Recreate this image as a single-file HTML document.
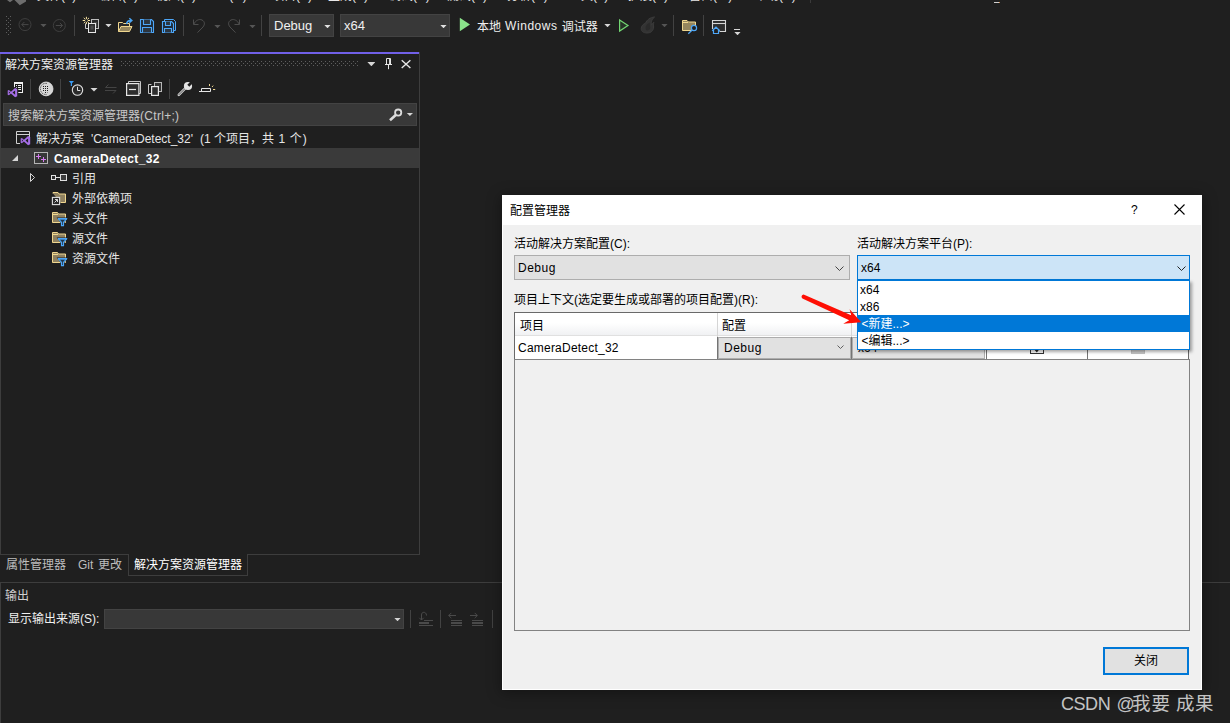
<!DOCTYPE html>
<html lang="zh-CN">
<head>
<meta charset="utf-8">
<title>配置管理器</title>
<style>
*{box-sizing:border-box;margin:0;padding:0}
html,body{width:1230px;height:723px;overflow:hidden;background:#1f1f1f}
body{position:relative;font-family:"Liberation Sans","Noto Sans CJK SC",sans-serif;font-size:12px;color:#e6e6e6;line-height:1}
.abs{position:absolute}
.t{position:absolute;white-space:nowrap;line-height:16px;height:16px}
svg{position:absolute;overflow:visible}
/* menu row (clipped) */
#menu{position:absolute;left:0;top:-12px;height:16px;width:1230px;color:#e8e8e8}
#menu span{position:absolute;top:0;white-space:nowrap;line-height:16px}
/* toolbar */
.combo{position:absolute;top:14px;height:23px;background:#383838;border:1px solid #434343;color:#f0f0f0;font-size:13px;line-height:21px;padding-left:4px}
.vsep{position:absolute;width:1px;background:#424242}
.dd{position:absolute;width:6.2px;height:3.3px;margin-left:.4px;background:#d0d0d0;clip-path:polygon(0 0,100% 0,50% 100%)}
/* solution explorer */
#se{position:absolute;left:0;top:52px;width:420px;height:503px;border-left:1px solid #3d3d3d;border-right:1px solid #3d3d3d;border-bottom:1px solid #3d3d3d;background:#1f1f1f}
#se .accent{position:absolute;left:-1px;top:0;width:419px;height:2px;background:#7160e8}
.row{position:absolute;left:0;width:418px;height:20px}
/* dialog */
#dlg{position:absolute;left:502px;top:195px;width:700px;height:495px;background:#f0f0f0;color:#000;box-shadow:0 2px 13px 1px rgba(0,0,0,.35)}
#dlg::after{content:"";position:absolute;left:0;top:0;width:700px;height:495px;border:1px solid #fff;box-sizing:border-box;pointer-events:none}
#dlg .title{position:absolute;left:0;top:0;width:700px;height:30px;background:#fff}

.dots{position:absolute;background-image:radial-gradient(circle,#5a5a5a 0.6px,transparent 0.8px);background-size:4px 4px;}
#search{position:absolute;left:2px;top:51px;width:414px;height:23px;background:#383838;border:1px solid #434343}
.row.sel{background:#3a3a3a}
#acttab{position:absolute;left:128px;top:554px;width:120px;height:22px;border:1px solid #3d3d3d;border-top:none;background:#1f1f1f}
#out{position:absolute;left:0;top:582px;width:1230px;height:141px;border-top:1px solid #3d3d3d;border-left:1px solid #3d3d3d}
#outcombo{position:absolute;left:103px;top:26px;width:300px;height:20px;background:#383838;border:1px solid #434343}
.wcombo{position:absolute;background:#e1e1e1;border:1px solid #adadad}
.wcombo.act{background:#cce4f7;border-color:#0078d7}
#grid{position:absolute;left:12px;top:117px;width:675px;height:48px;background:#fff;border:1px solid #696969}
#grid .hdr{position:absolute;left:0;top:0;width:673px;height:23px;background:linear-gradient(#fff 0,#fff 45%,#f0f1f3 100%);border-bottom:1px solid #e0e0e0}
.cline{position:absolute;top:0;width:1px;height:46px;background:#d5d5d5}
.gcombo{position:absolute;background:#e1e1e1;border:1px solid #adadad}
.cb{position:absolute;width:14px;height:13px;border:1px solid #333;background:#fff}
.cb.dis{border-color:#c4c4c4;background:#cfcfcf}
#gridbody{position:absolute;left:12px;top:164px;width:676px;height:272px;border:1px solid #828282;background:#f0f0f0}
#ddl{position:absolute;left:355px;top:85px;width:333px;height:70px;background:#fff;border:1px solid #0078d7;box-shadow:2px 2px 3px rgba(0,0,0,.35)}
#ddl .it{position:absolute;left:0;width:331px;height:17px;line-height:19px;padding-left:2px;white-space:nowrap;overflow:hidden}
#ddl .it.hi{background:#0078d7;color:#fff}
#closebtn{position:absolute;left:601px;top:452px;width:86px;height:28px;border:2px solid #0078d7;background:#e1e1e1;text-align:center;line-height:24px}
#wm{position:absolute;left:1061px;top:693px;width:160px;height:22px;font-size:18.500px;line-height:22px;color:#c4c4c4;white-space:nowrap}
#wm span{position:absolute;top:0}

.grip{position:absolute;width:5px;height:20px;background-image:radial-gradient(circle,#5c5c5c 0.7px,transparent 0.9px),radial-gradient(circle,#5c5c5c 0.7px,transparent 0.9px);background-size:4px 4px,4px 4px;background-position:-1.5px -1.5px,0.5px 0.5px}
.seg{position:absolute;top:0}
.dline{position:absolute;top:24px;width:1px;height:22px;background:#747474}
</style>
</head>
<body>
<div id="menu"><span style="left:37px">文件(F)</span><span style="left:98px">编辑(E)</span><span style="left:156px">视图(V)</span><span style="left:214px">Git(G)</span><span style="left:272px">项目(P)</span><span style="left:328px">生成(B)</span><span style="left:389px">调试(D)</span><span style="left:447px">测试(S)</span><span style="left:507px">分析(N)</span><span style="left:569px">工具(T)</span><span style="left:628px">扩展(X)</span><span style="left:689px">窗口(W)</span><span style="left:755px">帮助(H)</span></div>
<svg style="left:0;top:0" width="30" height="6" viewBox="0 0 30 6"><path d="M7 0L10 2.200L13 0Z M14.500 0L19.800 5.200L26 1.500V0Z" fill="#6e6e6e"/></svg>
<div class="abs" style="left:994px;top:2px;width:5px;height:1px;background:#cfcfcf"></div><div class="abs" style="left:999px;top:2px;width:1px;height:1px;background:#d08a4a"></div><div class="abs" style="left:810px;top:0;width:1px;height:3px;background:#3a3a3a"></div>
<div id="tb">
<svg style="left:6px;top:16px" width="5" height="20" viewBox="0 0 5 20" shape-rendering="crispEdges"><defs><pattern id="gp" width="4" height="4" patternUnits="userSpaceOnUse"><rect x="0" y="0" width="1" height="1" fill="#5e5e5e"/><rect x="2" y="2" width="1" height="1" fill="#5e5e5e"/></pattern></defs><rect width="5" height="20" fill="url(#gp)"/></svg>
<svg style="left:18px;top:18px" width="14" height="14" viewBox="0 0 14 14"><circle cx="7" cy="6.6" r="6" fill="none" stroke="#3e3e3e" stroke-width="1"/><path d="M10.5 6.6H3.8M6.4 4L3.8 6.6L6.4 9.2" fill="none" stroke="#474747" stroke-width="1"/></svg>
<div class="dd" style="left:40px;top:24px;background:#555"></div>
<svg style="left:52px;top:18px" width="14" height="14" viewBox="0 0 14 14"><circle cx="7.3" cy="7.5" r="6" fill="none" stroke="#3e3e3e" stroke-width="1"/><path d="M3.8 7.5H10.5M7.9 4.9L10.5 7.5L7.9 10.1" fill="none" stroke="#474747" stroke-width="1"/></svg>
<div class="vsep" style="left:74px;top:15px;height:21px"></div>
<!-- new project -->
<svg style="left:82px;top:16px" width="18" height="18" viewBox="82 16 18 18">
<rect x="91.5" y="19.5" width="7" height="9" fill="#2a2a2a" stroke="#bdbdbd" stroke-width="1"/>
<rect x="94" y="22" width="3" height="5" fill="#4a4a4a"/>
<path d="M85.5 23.5V28.5H88.5" fill="none" stroke="#c8c8c8" stroke-width="1"/>
<rect x="88.5" y="23.5" width="7" height="9" fill="#2e2e2e" stroke="#e6e6e6" stroke-width="1"/>
<rect x="90.5" y="25.5" width="3" height="4" fill="#4a4a4a"/>
<path d="M87.80 20.50L90.10 20.50M87.39 21.49L89.02 23.12M86.40 21.90L86.40 24.20M85.41 21.49L83.78 23.12M85.00 20.50L82.70 20.50M85.41 19.51L83.78 17.88M86.40 19.10L86.40 16.80M87.39 19.51L89.02 17.88" stroke="#f7e3a1" stroke-width="1" fill="none"/>
</svg>
<div class="dd" style="left:105px;top:24px;background:#d6d6d6"></div>
<!-- open folder -->
<svg style="left:117px;top:16px" width="18" height="18" viewBox="117 16 18 18">
<path d="M118.5 31.5V22.5H122.5L123.5 23.5H129.5V26" fill="#2b2b2b" stroke="#f0d78f" stroke-width="1"/>
<path d="M118.5 31.5L121 26.5H132L129.5 31.5Z" fill="#96875f" stroke="#f0d78f" stroke-width="1" stroke-linejoin="round"/>
<path d="M126.7 24C126.7 21.5 128 20.4 131 20.4M129.3 18.2L131.8 20.4L129.3 22.7" fill="none" stroke="#4ba6f5" stroke-width="1.5"/>
</svg>
<!-- save -->
<svg style="left:139px;top:17px" width="17" height="17" viewBox="139 17 17 17">
<path d="M140.5 19.5H151.5L153.5 21.5V32.5H140.5Z" fill="#1f2a36" stroke="#4da6f7" stroke-width="1.1"/>
<path d="M143.5 19.5V24.5H150.5V19.5" fill="#2b3540" stroke="#4da6f7" stroke-width="1.1"/>
<path d="M142.5 32.5V27.5H151.5V32.5" fill="#2b3540" stroke="#4da6f7" stroke-width="1.1"/>
</svg>
<!-- save all -->
<svg style="left:161px;top:17px" width="17" height="17" viewBox="161 17 17 17">
<path d="M164.500 21V19.500H173.500L175.500 21.500V30.500H174" fill="none" stroke="#4da6f7" stroke-width="1"/>
<path d="M162.500 21.500H171.500L173.500 23.500V32.500H162.500Z" fill="#1f2a36" stroke="#4da6f7" stroke-width="1.1"/>
<path d="M165.500 21.500V25.500H170.500V21.500" fill="#2b3540" stroke="#4da6f7" stroke-width="1.1"/>
<path d="M164.500 32.500V28.500H171.500V32.500" fill="#2b3540" stroke="#4da6f7" stroke-width="1.1"/>
</svg>
<div class="vsep" style="left:183px;top:15px;height:21px"></div>
<!-- undo -->
<svg style="left:192px;top:17px" width="15" height="17" viewBox="192 17 15 17">
<path d="M193.500 19.500V24.500H198.500" fill="none" stroke="#4d4d4d" stroke-width="1"/>
<path d="M193.800 24.200C195.500 20.500 199 18.600 202 20C205 21.600 205 24.500 203 27L197.500 32.600" fill="none" stroke="#4d4d4d" stroke-width="1"/>
</svg>
<div class="dd" style="left:214px;top:25px;background:#555"></div>
<!-- redo -->
<svg style="left:227px;top:17px" width="15" height="17" viewBox="227 17 15 17">
<path d="M239.500 19.500V24.500H234.500" fill="none" stroke="#4d4d4d" stroke-width="1"/>
<path d="M239.200 24.200C237.500 20.500 234 18.600 231 20C228 21.600 228 24.500 230 27L235.500 32.600" fill="none" stroke="#4d4d4d" stroke-width="1"/>
</svg>
<div class="dd" style="left:249px;top:25px;background:#555"></div>
<div class="vsep" style="left:261px;top:15px;height:21px"></div>
<div class="combo" style="left:269px;width:65px">Debug</div>
<div class="dd" style="left:324px;top:25px;background:#e0e0e0"></div>
<div class="combo" style="left:340px;width:110px;padding-left:3px">x64</div>
<div class="dd" style="left:440px;top:25px;background:#e0e0e0"></div>
<svg style="left:459px;top:17px" width="12" height="15" viewBox="0 0 12 15"><path d="M0.8 0.8L11 7.5L0.8 14.2Z" fill="#8ae28a"/></svg>
<div class="t" style="left:477px;top:18px;color:#f0f0f0;word-spacing:0.7px"><span style="position:relative;top:0.7px">本地</span> <span style="letter-spacing:0.55px">Windows</span> <span style="position:relative;top:0.7px">调试器</span></div>
<div class="dd" style="left:604px;top:24px;background:#d6d6d6"></div>
<svg style="left:618px;top:18px" width="12" height="15" viewBox="618 18 12 15"><path d="M619.600 19.900L628 25.500L619.600 31.100Z" fill="#263326" stroke="#72d572" stroke-width="1.2"/></svg>
<!-- flame -->
<svg style="left:640px;top:16px" width="16" height="18" viewBox="640 16 16 18">
<path d="M654.600 17C650 17.400 646.600 20 645.600 23.200C643 24 641.200 26.200 641.200 28.600C641.200 31.400 643.600 33 647.200 33C651 33 653.600 30.600 653.600 27C653.600 25.500 653.300 24.400 653.900 22.400C652.600 23 652 24 651.800 25.200C650.800 23 651.200 19.600 654.600 17Z" fill="#333" stroke="#3d3d3d" stroke-width="0.9"/>
<path d="M650 22.500C647.500 23.500 645.500 25.500 645.500 28C645.500 29.500 646.300 30.600 647.500 30.600C649.200 30.600 650.400 29 650.200 27C649.900 25.500 649.600 24.200 650 22.500Z" fill="#2a2a2a"/>
</svg>
<div class="dd" style="left:661px;top:24px;background:#555"></div>
<div class="vsep" style="left:673px;top:15px;height:21px"></div>
<!-- folder search -->
<svg style="left:681px;top:18px" width="18" height="17" viewBox="681 18 18 17">
<path d="M682.500 30.500V20.500H687L688.500 22H695.500V30.500Z" fill="#95865e" stroke="#f0d78f" stroke-width="1"/>
<path d="M683 22.500H688" stroke="#f0d78f" stroke-width="1"/><circle cx="694" cy="28" r="2.600" fill="#1f1f1f" stroke="#4da6f7" stroke-width="1.200"/>
<path d="M692.200 30L688.300 33.800" stroke="#4da6f7" stroke-width="1.200" fill="none"/>
</svg>
<div class="vsep" style="left:703px;top:15px;height:21px"></div>
<!-- window home -->
<svg style="left:711px;top:18px" width="17" height="17" viewBox="711 18 17 17">
<path d="M719.500 31.500H725.500V20.500H712.500V29" fill="#2e2e2e" stroke="#d6d6d6" stroke-width="1.100"/>
<path d="M712.500 23.500H725.500" stroke="#d6d6d6" stroke-width="1.100"/>
<path d="M712.200 30.800L716 27.200L719.800 30.800M713.500 30V33.500H718.500V30" fill="#1f1f1f" stroke="#4da6f7" stroke-width="1.200"/>
</svg>
<div class="abs" style="left:734px;top:29px;width:6px;height:1px;background:#d6d6d6"></div>
<div class="dd" style="left:734px;top:32px;background:#d6d6d6"></div>
</div>
<div id="se"><div class="accent"></div>

<div class="t" style="left:4px;top:5px;color:#f0f0f0">解决方案资源管理器</div>
<svg style="left:120px;top:9px" width="238" height="5" viewBox="0 0 238 5" shape-rendering="crispEdges"><rect width="238" height="5" fill="url(#gp)"/></svg>
<div class="dd" style="left:366px;top:10px;background:#d6d6d6;width:8px;height:4.200px"></div>
<div id="search"><span class="t" style="left:4px;top:4px;color:#c8c8c8">搜索解决方案资源管理器<span style="letter-spacing:0.3px">(Ctrl+;)</span></span></div>
<div class="row" style="top:76px"><span class="t" style="left:35px;top:3px">解决方案 <span class="seg" id="s1" style="left:55px">'CameraDetect_32'</span> <span class="seg" id="s2" style="left:164px">(1 个项目，共<span style="word-spacing:1.2px"> 1 个</span><span style="margin-left:1px">)</span></span></span></div>
<div class="row sel" style="top:96px"><span class="t" style="left:53px;top:3px;font-weight:bold;color:#fff;letter-spacing:0.33px">CameraDetect_32</span></div>
<div class="row" style="top:116px"><span class="t" style="left:71px;top:3px">引用</span></div>
<div class="row" style="top:136px"><span class="t" style="left:71px;top:3px">外部依赖项</span></div>
<div class="row" style="top:156px"><span class="t" style="left:71px;top:3px">头文件</span></div>
<div class="row" style="top:176px"><span class="t" style="left:71px;top:3px">源文件</span></div>
<div class="row" style="top:196px"><span class="t" style="left:71px;top:3px">资源文件</span></div>

<svg style="left:-1px;top:-52px" width="420" height="330" viewBox="0 0 420 330">
<!-- pin -->
<path d="M386.500 64V58.500H390.500V64M385 64.500H392M388.500 65V69.200M389.600 58.500V64" fill="none" stroke="#e6e6e6" stroke-width="1"/>
<!-- close -->
<path d="M401.700 60.300L410.400 68M410.400 60.300L401.700 68" fill="none" stroke="#e6e6e6" stroke-width="1.400"/>
<!-- icon1: doc + VS -->
<rect x="14.500" y="82.500" width="8" height="10" fill="#1b1b1b" stroke="#f0f0f0" stroke-width="1"/>
<path d="M14.500 83.500H22.500" stroke="#f0f0f0" stroke-width="1"/>
<path d="M16 85.500H17M18 85.500H21M16 87.500H17M18 87.500H21M18 89.500H21" stroke="#f0f0f0" stroke-width="1"/>
<g id="vslogo"><path d="M7 89.500L12.500 86.500L18.300 88.300V97.500L12 98.200L7 96Z" fill="#1f1f1f"/>
<path fill-rule="evenodd" d="M15.100 88L17.200 88.900V96.300L15.100 97.200L10.900 93.500L8.900 95.300L7.700 94.700V90.500L8.900 89.900L10.900 91.700ZM15.100 90.400L12.500 92.600L15.100 94.800ZM8.900 91.500V93.700L10.100 92.600Z" fill="#a56ee6"/></g>
<path d="M30.500 79V99M60.500 79V99M169.500 79V99" stroke="#424242" stroke-width="1"/>
<!-- icon2: globe-like -->
<circle cx="46.100" cy="88.900" r="6.900" fill="#d6d6d6" stroke="#ececec" stroke-width="0.800"/>
<g fill="#1e1e1e"><rect x="43" y="86" width="1" height="1"/><rect x="45" y="86" width="1" height="1"/><rect x="47" y="86" width="1" height="1"/><rect x="43" y="88" width="1" height="1"/><rect x="45" y="88" width="1" height="1"/><rect x="47" y="88" width="1" height="1"/><rect x="43" y="90" width="1" height="1"/><rect x="45" y="90" width="1" height="1"/><rect x="47" y="90" width="1" height="1"/><rect x="45" y="92" width="1" height="1"/><rect x="47" y="92" width="1" height="1" opacity="0.4"/></g>
<path d="M47 83.400C42.500 82.800 40.400 85.800 40.400 88.900C40.400 92 42.500 95 47 94.400" fill="none" stroke="#555" stroke-width="0.900" stroke-dasharray="1.600 0.800"/>
<!-- icon3: filter + clock -->
<path d="M68.800 81H74L72 83.200V86H70.800V83.200Z" fill="#3a9cf5"/>
<circle cx="77.500" cy="90.100" r="5.200" fill="#2b2b2b" stroke="#e0e0e0" stroke-width="1.100"/>
<path d="M77.500 86.800V90.500H80.300" fill="none" stroke="#e0e0e0" stroke-width="1"/>
<path d="M90.500 88H97.500L94 91.500Z" fill="#d6d6d6"/>
<!-- sync disabled -->
<path d="M116.500 87.500H105.500L108.500 84.500M105 90.500H116L113 93.500" fill="none" stroke="#444" stroke-width="1"/>
<!-- collapse all -->
<path d="M128.500 83V81.500H140.500V93.500H139" fill="none" stroke="#c8c8c8" stroke-width="1"/>
<rect x="126.600" y="83.600" width="12.300" height="11.800" fill="#2e2e2e" stroke="#e6e6e6" stroke-width="1.200"/>
<path d="M129 89.500H136" stroke="#e6e6e6" stroke-width="1.200"/>
<!-- show all files -->
<rect x="154.500" y="82.500" width="7" height="9" fill="#333" stroke="#b8b8b8" stroke-width="1"/>
<path d="M155.500 86V90H159" fill="none" stroke="#6a6a6a" stroke-width="1"/>
<path d="M151.500 84.500H148.500V93.500H151.500" fill="none" stroke="#c8c8c8" stroke-width="1"/>
<rect x="151.600" y="86.600" width="6.800" height="8.800" fill="#2e2e2e" stroke="#e6e6e6" stroke-width="1.200"/>
<!-- wrench -->
<path d="M178.800 94.800L186.200 87.400" stroke="#d0d0d0" stroke-width="2.600" stroke-linecap="round"/>
<path d="M178.900 94.700L186 87.600" stroke="#4a4a4a" stroke-width="0.900" stroke-linecap="round"/>
<circle cx="188" cy="86" r="4.100" fill="#e6e6e6"/><path d="M188.300 85.700L193 81" stroke="#1f1f1f" stroke-width="2.800" fill="none"/>
<!-- preview selected -->
<path d="M199 91.500H210.500V88.500H201.500V91.500" fill="none" stroke="#e6e6e6" stroke-width="1"/>
<path d="M209.500 84V86M212 87L213.200 85.600M213 89.500H215.200" stroke="#f0d78f" stroke-width="1"/>
<!-- search icon -->
<circle cx="398.200" cy="112.600" r="3.100" fill="none" stroke="#dcdcdc" stroke-width="1.800"/>
<path d="M396 114.800L390 120.200" stroke="#dcdcdc" stroke-width="2.600"/>
<path d="M406.800 112.900H413L409.900 116.100Z" fill="#d6d6d6"/>
<!-- solution icon -->
<path d="M20 143.500H16.500V131.500H29.500V137" fill="none" stroke="#d0d0d0" stroke-width="1"/>
<path d="M16.500 134.500H29.500" stroke="#d0d0d0" stroke-width="1"/>
<g transform="translate(13,48)"><path fill-rule="evenodd" d="M15.100 88L17.200 88.900V96.300L15.100 97.200L10.900 93.500L8.900 95.300L7.700 94.700V90.500L8.900 89.900L10.900 91.700ZM15.100 90.400L12.500 92.600L15.100 94.800ZM8.900 91.500V93.700L10.100 92.600Z" fill="#a56ee6"/></g>
<!-- expander open -->
<path d="M18 155V161H12Z" fill="#d6d6d6"/>
<!-- project icon -->
<rect x="34.500" y="152.500" width="13" height="11" fill="#383838" stroke="#b4b4b4" stroke-width="1"/>
<path d="M36 156.500H41M38.500 154V159M41 159.500H46M43.500 157V162" stroke="#d67cf0" stroke-width="1"/>
<!-- expander closed -->
<path d="M30.500 173.500L34.500 177.500L30.500 181.500Z" fill="none" stroke="#d6d6d6" stroke-width="1"/>
<!-- references -->
<rect x="51.500" y="175.500" width="4" height="4" fill="#2e2e2e" stroke="#e0e0e0" stroke-width="1"/>
<path d="M56 177.500H60" stroke="#e0e0e0" stroke-width="1"/>
<rect x="60.500" y="174.500" width="6" height="6" fill="#3e3e3e" stroke="#e0e0e0" stroke-width="1"/>
<!-- external deps -->
<path d="M53 193.500V192.500H58L59 194H65.500V202.500H60.500" fill="#8f8160" stroke="#f0d78f" stroke-width="1"/>
<rect x="52.400" y="197.400" width="7.200" height="7.200" fill="#2a2a2a" stroke="#e0e0e0" stroke-width="1.100"/>
<path d="M54.500 202.500L57.500 199.500M55 199.500H57.500V202" fill="none" stroke="#d6d6d6" stroke-width="1"/>
</svg>
<svg style="left:50px;top:159px" width="17" height="16" viewBox="51 211 17 16">
<path d="M52.500 222.500V212.500H57.500L58.500 214H65.500V222.500Z" fill="#8f8160" stroke="#f0d78f" stroke-width="1"/>
<path d="M53 214.500H58" stroke="#f0d78f" stroke-width="1"/>
<path d="M56.600 217.400H68.400L64.600 222.200V227H60.400V222.200Z" fill="#1f1f1f"/>
<path d="M58.200 218.700H66.800L63.500 222.300V225.700H61.500V222.300Z" fill="#22384d" stroke="#4da6f7" stroke-width="1.200" stroke-linejoin="round"/><path d="M58 218.900H67" stroke="#4da6f7" stroke-width="1.300"/>
</svg>
<svg style="left:50px;top:179px" width="17" height="16" viewBox="51 211 17 16">
<path d="M52.500 222.500V212.500H57.500L58.500 214H65.500V222.500Z" fill="#8f8160" stroke="#f0d78f" stroke-width="1"/>
<path d="M53 214.500H58" stroke="#f0d78f" stroke-width="1"/>
<path d="M56.600 217.400H68.400L64.600 222.200V227H60.400V222.200Z" fill="#1f1f1f"/>
<path d="M58.200 218.700H66.800L63.500 222.300V225.700H61.500V222.300Z" fill="#22384d" stroke="#4da6f7" stroke-width="1.200" stroke-linejoin="round"/><path d="M58 218.900H67" stroke="#4da6f7" stroke-width="1.300"/>
</svg>
<svg style="left:50px;top:199px" width="17" height="16" viewBox="51 211 17 16">
<path d="M52.500 222.500V212.500H57.500L58.500 214H65.500V222.500Z" fill="#8f8160" stroke="#f0d78f" stroke-width="1"/>
<path d="M53 214.500H58" stroke="#f0d78f" stroke-width="1"/>
<path d="M56.600 217.400H68.400L64.600 222.200V227H60.400V222.200Z" fill="#1f1f1f"/>
<path d="M58.200 218.700H66.800L63.500 222.300V225.700H61.500V222.300Z" fill="#22384d" stroke="#4da6f7" stroke-width="1.200" stroke-linejoin="round"/><path d="M58 218.900H67" stroke="#4da6f7" stroke-width="1.300"/>
</svg>
</div>
<div id="tabs">
<div class="t" style="left:6px;top:557px;color:#bdbdbd">属性管理器</div>
<div class="t" style="left:78px;top:557px;color:#bdbdbd;word-spacing:1.300px">Git 更改</div>
<div id="acttab"><span class="t" style="left:5px;top:3px;color:#fff">解决方案资源管理器</span></div>
</div>
<div id="out">
<div class="t" style="left:4px;top:5px;color:#d0d0d0">输出</div>
<div class="t" style="left:7px;top:28px;color:#f0f0f0">显示输出来源(S):</div>
<div id="outcombo"></div>
<div class="dd" style="left:393px;top:35px;background:#d6d6d6"></div>
<svg style="left:-1px;top:-583px" width="520" height="723" viewBox="0 0 520 723">
<path d="M410.500 610V628M440.500 610V628M492.500 610V628" stroke="#424242" stroke-width="1"/>
<g stroke="#4a4a4a" fill="none" stroke-width="1">
<path d="M424 620.500H433M419 625.500H433M451 620.500H462M451 625.500H462M472 620.500H483M472 625.500H483"/>
<path d="M419 623H429M451 623H462M472 623H483" stroke-width="2"/>
<path d="M426.500 615.500C426.500 613 424.800 612.300 423.800 612.300C422.500 612.300 421.500 613.200 421.500 615V620M419.300 617.800L421.500 620L423.700 617.800"/>
<path d="M456 615.500H448.700M451.300 612.900L448.700 615.500L451.300 618.100"/>
<path d="M470 615.500H477.300M474.700 612.900L477.300 615.500L474.700 618.100"/>
</g>
</svg>
</div>
<div id="dlg"><div class="title"><span class="t" style="left:8px;top:8px">配置管理器</span>
<span class="t" style="left:629px;top:7px;font-size:12px">?</span>
<svg style="left:672px;top:9px" width="11" height="11" viewBox="0 0 11 11"><path d="M0.5 0.5L10.5 10.5M10.5 0.5L0.5 10.5" stroke="#000" stroke-width="1.1" fill="none"/></svg>
</div>
<div class="t" style="left:12px;top:41px">活动解决方案配置(C):</div>
<div class="t" style="left:355px;top:41px">活动解决方案平台(P):</div>
<div class="wcombo" style="left:12px;top:60px;width:336px;height:25px"><span class="t" style="left:3px;top:4px;letter-spacing:0.5px">Debug</span>
<svg style="left:319.500px;top:10px" width="9" height="5" viewBox="0 0 9 5"><path d="M0.5 0.5L4.5 4.5L8.5 0.5" stroke="#444" stroke-width="1" fill="none"/></svg></div>
<div class="wcombo act" style="left:355px;top:60px;width:333px;height:25px"><span class="t" style="left:3px;top:4px">x64</span>
<svg style="left:318.500px;top:10px" width="9" height="5" viewBox="0 0 9 5"><path d="M0.5 0.5L4.5 4.5L8.5 0.5" stroke="#222" stroke-width="1" fill="none"/></svg></div>
<div class="t" style="left:12px;top:97px">项目上下文(选定要生成或部署的项目配置)(R):</div>
<div id="grid">
 <div class="hdr"></div>
 <span class="t" style="left:5px;top:5px">项目</span>
 <span class="t" style="left:207px;top:5px">配置</span>
 <div class="cline" style="left:202px"></div><div class="cline" style="left:336px"></div><div class="cline" style="left:471px"></div><div class="cline" style="left:572px"></div>
 <div class="drow"></div><div class="dline" style="left:202px"></div><div class="dline" style="left:336px"></div><div class="dline" style="left:471px"></div><div class="dline" style="left:572px"></div>
 <span class="t" style="left:3px;top:27px;letter-spacing:0.22px">CameraDetect_32</span>
 <div class="gcombo" style="left:203px;top:24px;width:133px;height:22px"><span class="t" style="left:5px;top:2px;letter-spacing:0.5px">Debug</span>
 <svg style="left:118px;top:7px" width="7" height="4" viewBox="0 0 7 4"><path d="M0.5 0.5L3.5 3.5L6.5 0.5" stroke="#606060" stroke-width="1" fill="none"/></svg></div>
 <div class="gcombo" style="left:337px;top:24px;width:133px;height:22px"><span class="t" style="left:5px;top:2px">x64</span></div>
 <div class="cb" style="left:515px;top:28px"><svg style="left:1px;top:1px" width="11" height="10" viewBox="0 0 11 10"><path d="M1.500 4.500L4.800 8.300L10 1.500" fill="none" stroke="#222" stroke-width="1.600"/></svg></div>
 <div class="cb dis" style="left:616px;top:28px"></div>
</div>
<div id="gridbody"></div>
<div id="ddl">
 <div class="it" style="top:0">x64</div>
 <div class="it" style="top:17px">x86</div>
 <div class="it hi" style="top:34px;padding-left:3.500px">&lt;新建...&gt;</div>
 <div class="it" style="top:51px;padding-left:3.500px">&lt;编辑...&gt;</div>
</div>
<svg style="left:0;top:0" width="700" height="495" viewBox="502 195 700 495"><path d="M803.6 294.6 L851.2 315.3 L849.6 309.2 L861.3 322.3 L843.2 323.7 L849.2 320.2 L802.4 298.4 A2.1 2.1 0 0 1 803.6 294.6Z" fill="#fe0f04"/></svg>
<div id="closebtn"><span>关闭</span></div>
</div>
<div id="wm"><span style="left:0;font-size:19px;letter-spacing:-0.5px;transform:scaleX(.95);transform-origin:0 0">CSDN</span><span style="left:55.500px;font-size:18px">@</span><span style="left:71px">我</span><span style="left:90.500px">要</span><span style="left:115px">成</span><span style="left:134px">果</span></div>
</body>
</html>
